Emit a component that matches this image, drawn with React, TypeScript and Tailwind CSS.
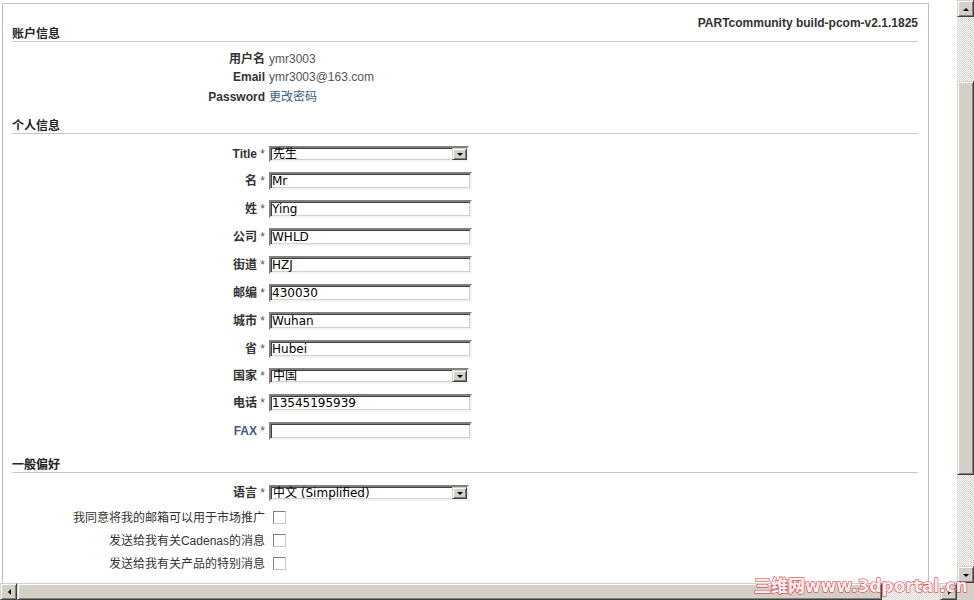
import React from 'react';

const sunken =
  'border-2 border-t-[#808080] border-l-[#808080] border-b-[#f4f4f4] border-r-[#f4f4f4] shadow-[inset_1px_1px_0_#404040,inset_-1px_-1px_0_#d4d0c8] bg-white';
const raised =
  'bg-[#d4d0c8] border border-t-[#d4d0c8] border-l-[#d4d0c8] border-b-[#404040] border-r-[#404040] shadow-[inset_1px_1px_0_#ffffff,inset_-1px_-1px_0_#808080]';
const checker =
  'bg-[image:repeating-conic-gradient(#d4d0c8_0_25%,#ffffff_0_50%)] bg-[length:2px_2px]';

function Arrow({ dir }: { dir: 'up' | 'down' | 'left' | 'right' }) {
  const pts = {
    up: '1,6 4,3 7,6',
    down: '1,3 4,6 7,3',
    left: '6,1 3,4 6,7',
    right: '3,1 6,4 3,7',
  }[dir];
  return (
    <svg width="8" height="8" viewBox="0 0 8 8">
      <polygon points={pts} fill="#000" />
    </svg>
  );
}

function SectionHead({ title }: { title: string }) {
  return (
    <div className="border-b border-[#c8c8c8] leading-[14px] font-bold text-[12px] text-[#222]">
      {title}
    </div>
  );
}

function Label({ text, star = true, color = 'text-[#333]' }: { text: string; star?: boolean; color?: string }) {
  return (
    <div className="w-[257px] shrink-0 text-right pr-[4px] whitespace-nowrap leading-[14px]">
      <span className={`font-bold ${color}`}>{text}</span>
      {star && <span className="text-[#555]"> *</span>}
    </div>
  );
}

function InputRow({ label, value, color }: { label: string; value: string; color?: string }) {
  return (
    <div className="flex items-center py-[5px]">
      <Label text={label} color={color} />
      <div className={`${sunken} w-[203px] h-[18px] flex items-center pl-[1px] font-['DejaVu_Sans','Noto_Sans_CJK_SC',sans-serif] text-[12px] leading-[14px] text-black`}>
        {value}
      </div>
    </div>
  );
}

function SelectRow({ label, value }: { label: string; value: string }) {
  return (
    <div className="flex items-center py-[5px]">
      <Label text={label} />
      <div className={`${sunken} w-[200px] h-[16px] flex items-center justify-between pl-[2px] font-['DejaVu_Sans','Noto_Sans_CJK_SC',sans-serif] text-[12px] leading-[12px] text-black`}>
        <span className="leading-[12px]">{value}</span>
        <div className={`${raised} w-[15px] h-[12px] flex items-center justify-center`}>
          <Arrow dir="down" />
        </div>
      </div>
    </div>
  );
}

function CheckRow({ label }: { label: string }) {
  return (
    <div className="flex items-center h-[23px] leading-[14px]">
      <div className="w-[257px] shrink-0 text-right pr-[4px] text-[#333] whitespace-nowrap">{label}</div>
      <div className="ml-[4px] w-[13px] h-[13px] border border-t-[#808080] border-l-[#808080] border-b-[#c8c8c8] border-r-[#c8c8c8] bg-white" />
    </div>
  );
}

export default function App(): React.ReactElement {
  return (
    <div className="relative w-[974px] h-[600px] overflow-hidden bg-white flex flex-col font-['Liberation_Sans','Noto_Sans_CJK_SC',sans-serif] text-[12px]">
      <div className="flex flex-1 min-h-0">
        {/* page content */}
        <div className="w-[957px] pl-[2px] pt-[3px]">
          <div className="w-[927px] h-full border-t border-l border-r border-[#c0c0c0] pl-[9px] pr-[10px]">
            <div className="h-[38px] flex justify-between border-b border-[#c8c8c8]">
              <div className="self-end leading-[14px] font-bold text-[#222]">账户信息</div>
              <div className="self-start mt-[12px] leading-[14px] font-bold text-[#333]">
                PARTcommunity build-pcom-v2.1.1825
              </div>
            </div>

            <div className="mt-[8px]">
              <div className="flex items-center h-[18px]">
                <Label text="用户名" star={false} />
                <span className="text-[#555]">ymr3003</span>
              </div>
              <div className="flex items-center h-[18px]">
                <Label text="Email" star={false} />
                <span className="text-[#555]">ymr3003@163.com</span>
              </div>
              <div className="flex items-center h-[18px] mt-[2px]">
                <Label text="Password" star={false} />
                <span className="text-[#3a5f88]">更改密码</span>
              </div>
            </div>

            <div className="mt-[13px]">
              <SectionHead title="个人信息" />
            </div>
            <div className="mt-[7px]">
              <SelectRow label="Title" value="先生" />
              <InputRow label="名" value="Mr" />
              <InputRow label="姓" value="Ying" />
              <InputRow label="公司" value="WHLD" />
              <InputRow label="街道" value="HZJ" />
              <InputRow label="邮编" value="430030" />
              <InputRow label="城市" value="Wuhan" />
              <InputRow label="省" value="Hubei" />
              <SelectRow label="国家" value="中国" />
              <InputRow label="电话" value="13545195939" />
              <InputRow label="FAX" value="" color="text-[#3d5c80]" />
            </div>

            <div className="mt-[13px]">
              <SectionHead title="一般偏好" />
            </div>
            <div className="mt-[7px]">
              <SelectRow label="语言" value="中文 (Simplified)" />
              <CheckRow label="我同意将我的邮箱可以用于市场推广" />
              <CheckRow label="发送给我有关Cadenas的消息" />
              <CheckRow label="发送给我有关产品的特别消息" />
            </div>
          </div>
        </div>

        {/* vertical scrollbar */}
        <div className="w-[17px] flex flex-col">
          <div className={`${raised} h-[17px] flex items-center justify-center`}>
            <Arrow dir="up" />
          </div>
          <div className={`${checker} h-[64px]`} />
          <div className={`${raised} h-[394px]`} />
          <div className={`${checker} flex-1`} />
          <div className={`${raised} h-[17px] flex items-center justify-center`}>
            <Arrow dir="down" />
          </div>
        </div>
      </div>

      {/* horizontal scrollbar */}
      <div className="h-[17px] flex">
        <div className={`${raised} w-[17px] flex items-center justify-center`}>
          <Arrow dir="left" />
        </div>
        <div className={`${raised} w-[865px]`} />
        <div className={`${checker} flex-1`} />
        <div className={`${raised} w-[17px] flex items-center justify-center`}>
          <Arrow dir="right" />
        </div>
        <div className="w-[17px] bg-[#d4d0c8]" />
      </div>

      {/* watermark */}
      <div className="absolute left-[754px] top-[577px] whitespace-nowrap font-['DejaVu_Sans','Noto_Sans_CJK_SC',sans-serif] font-black text-[17px] leading-[19px] tracking-[0px] text-[#fff0f0] [-webkit-text-stroke:1px_#e0141e] [paint-order:stroke_fill]">
        三维网www.3dportal.cn
      </div>
    </div>
  );
}
